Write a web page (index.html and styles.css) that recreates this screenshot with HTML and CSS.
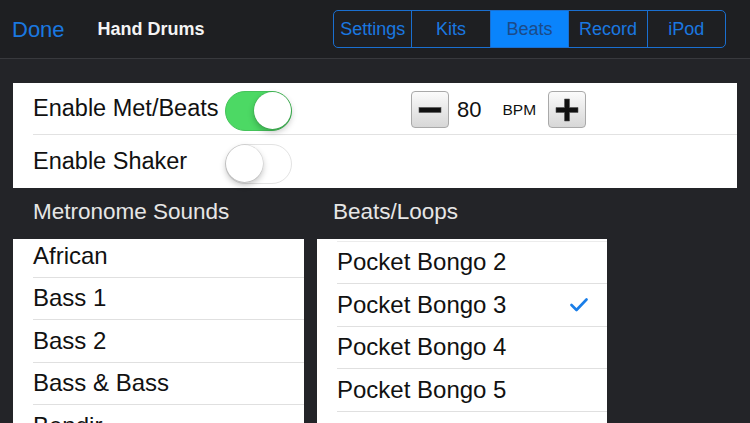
FILE: index.html
```html
<!DOCTYPE html>
<html>
<head>
<meta charset="utf-8">
<link rel="stylesheet" href="styles.css">
</head>
<body>
<header class="nav">
  <span class="done">Done</span>
  <span class="title">Hand Drums</span>
  <div class="seg">
    <span class="seg-item">Settings</span>
    <span class="seg-item">Kits</span>
    <span class="seg-item active">Beats</span>
    <span class="seg-item">Record</span>
    <span class="seg-item">iPod</span>
  </div>
</header>
<main class="main">
  <section class="panel">
    <div class="row row-first">
      <span class="label">Enable Met/Beats</span>
      <span class="switch on"><span class="knob"></span></span>
      <div class="stepper">
        <span class="step-btn">
          <svg width="24" height="24" viewBox="0 0 24 24"><rect x="1" y="9.5" width="22" height="5" fill="#111" stroke="#555" stroke-width="0.6"/></svg>
        </span>
        <span class="bpm-val">80</span>
        <span class="bpm-unit">BPM</span>
        <span class="step-btn">
          <svg width="24" height="24" viewBox="0 0 24 24"><path d="M9.5 1h5v8.5H23v5h-8.5V23h-5v-8.5H1v-5h8.5z" fill="#111" stroke="#555" stroke-width="0.6"/></svg>
        </span>
      </div>
    </div>
    <div class="row">
      <span class="label">Enable Shaker</span>
      <span class="switch off"><span class="knob"></span></span>
    </div>
  </section>
  <section class="lists">
    <div class="col col-left">
      <div class="col-title">Metronome Sounds</div>
      <div class="list">
        <ul class="items items-left">
          <li>African</li>
          <li>Bass 1</li>
          <li>Bass 2</li>
          <li>Bass &amp; Bass</li>
          <li>Bendir</li>
        </ul>
      </div>
    </div>
    <div class="col col-right">
      <div class="col-title">Beats/Loops</div>
      <div class="list">
        <ul class="items items-right">
          <li>Pocket Bongo 2</li>
          <li class="checked">Pocket Bongo 3
            <svg class="check" width="18" height="14" viewBox="0 0 18 14"><polyline points="1.5,7 6.5,12 16.5,1.5" fill="none" stroke="#1a7ee8" stroke-width="2.6" stroke-linecap="round" stroke-linejoin="round"/></svg>
          </li>
          <li>Pocket Bongo 4</li>
          <li>Pocket Bongo 5</li>
          <li>Pocket Solo 1</li>
        </ul>
      </div>
    </div>
  </section>
</main>
</body>
</html>
```

FILE: styles.css
```css
html, body {
  margin: 0;
  padding: 0;
}
body {
  width: 750px;
  height: 423px;
  overflow: hidden;
  background: #232428;
  font-family: "Liberation Sans", Arial, sans-serif;
}
.nav {
  height: 58px;
  background: #1e1f22;
  border-bottom: 1px solid #38393d;
  display: flex;
  align-items: center;
}
.done {
  margin-left: 12px;
  font-size: 22px;
  color: #1a78e0;
  position: relative;
  top: 1px;
}
.title {
  margin-left: 33px;
  font-size: 18px;
  font-weight: bold;
  color: #f4f4f4;
}
.seg {
  margin-left: auto;
  margin-right: 24px;
  display: flex;
  width: 393px;
  height: 38px;
  box-sizing: border-box;
  border: 1px solid #1a6fd0;
  border-radius: 5px;
  overflow: hidden;
}
.seg-item {
  flex: 1 1 0;
  display: flex;
  align-items: center;
  justify-content: center;
  font-size: 18px;
  color: #1a78e0;
  border-left: 1px solid #1a6fd0;
}
.seg-item:first-child {
  border-left: none;
}
.seg-item.active {
  background: #0a84fc;
  color: #1c4b88;
}
.main {
  padding-top: 24px;
}
.panel {
  margin: 0 13px;
  background: #fff;
  height: 105px;
}
.row {
  margin-left: 20px;
  height: 52px;
  display: flex;
  align-items: center;
}
.row-first {
  border-bottom: 1px solid #e2e2e2;
  height: 52px;
  box-sizing: border-box;
}
.row + .row {
  height: 53px;
}
.label {
  flex: 0 0 192px;
  font-size: 23.5px;
  color: #111;
  white-space: nowrap;
}
.switch {
  position: relative;
  width: 67px;
  height: 40px;
  box-sizing: border-box;
  border-radius: 20px;
  flex: 0 0 auto;
  margin-top: 4px;
}
.switch.on {
  background: #4cd964;
  border: 1.5px solid #45c35a;
}
.switch.off {
  background: #fff;
  border: 1.5px solid #e3e3e3;
}
.knob {
  position: absolute;
  top: 0;
  width: 37px;
  height: 37px;
  border-radius: 50%;
  background: #fff;
  box-shadow: 0 3px 6px rgba(0,0,0,0.25), 0 0 0 0.5px rgba(0,0,0,0.12);
}
.switch.on .knob { right: 0; }
.switch.off .knob { left: 0; }
.stepper {
  margin-left: 119px;
  display: flex;
  align-items: center;
  margin-top: 2px;
}
.step-btn {
  width: 38px;
  height: 37px;
  box-sizing: border-box;
  border: 1px solid #a9a9a9;
  border-radius: 4px;
  background: linear-gradient(#fbfbfb, #d7d7d7);
  display: flex;
  align-items: center;
  justify-content: center;
}
.bpm-val {
  margin-left: 8px;
  font-size: 22px;
  color: #111;
}
.bpm-unit {
  margin-left: 21px;
  margin-right: 12px;
  font-size: 15.5px;
  color: #111;
}
.lists {
  display: flex;
  gap: 13px;
  padding: 0 13px;
}
.col-left { width: 291px; }
.col-right { width: 290px; }
.col-title {
  height: 51px;
  display: flex;
  align-items: center;
  font-size: 22.5px;
  color: #e6e6e6;
  padding-left: 20px;
  box-sizing: border-box;
  padding-bottom: 3px;
  white-space: nowrap;
}
.col-right .col-title { padding-left: 16px; }
.list {
  background: #fff;
  height: 200px;
  overflow: hidden;
}
.items {
  list-style: none;
  margin: 0 0 0 20px;
  padding: 0;
}
.items-left { margin-top: -4px; }
.items-right {
  margin-top: 1.5px;
  border-top: 1px solid #ececec;
}
.items li {
  height: 42.5px;
  box-sizing: border-box;
  border-bottom: 1px solid #e0e0e0;
  display: flex;
  align-items: center;
  font-size: 24px;
  color: #111;
  white-space: nowrap;
}
.items li.checked {
  justify-content: space-between;
  padding-right: 19px;
}
```
